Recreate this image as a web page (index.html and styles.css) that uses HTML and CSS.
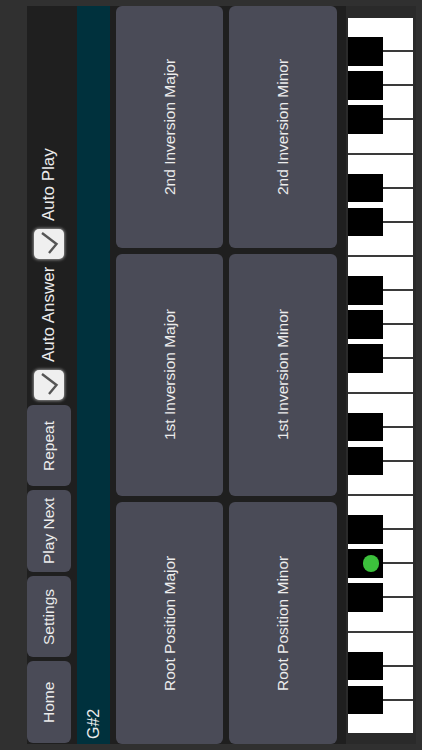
FILE: index.html
```html
<!DOCTYPE html>
<html lang="en">
<head>
  <meta charset="UTF-8" />
  <meta name="viewport" content="width=device-width, initial-scale=1" />
  <title>Chord Trainer</title>
  <link rel="stylesheet" href="styles.css">
</head>
<body>
  <div class="stage">
    <div class="panel">
      <div class="toolbar">
        <button class="tool-button">Home</button>
        <button class="tool-button">Settings</button>
        <button class="tool-button">Play Next</button>
        <button class="tool-button">Repeat</button>
        <div class="check-box first-check">
          <svg viewBox="0 0 30 30" width="30" height="30"><path d="M22 26 L7.5 15 L15 6" fill="none" stroke="#555" stroke-width="2.4"/></svg>
        </div>
        <span class="check-label">Auto Answer</span>
        <div class="check-box">
          <svg viewBox="0 0 30 30" width="30" height="30"><path d="M22 26 L7.5 15 L15 6" fill="none" stroke="#555" stroke-width="2.4"/></svg>
        </div>
        <span class="check-label">Auto Play</span>
      </div>
      <div class="status">G#2</div>
      <div class="chords">
        <button class="chord-button">Root Position Major</button>
        <button class="chord-button">1st Inversion Major</button>
        <button class="chord-button">2nd Inversion Major</button>
        <button class="chord-button">Root Position Minor</button>
        <button class="chord-button">1st Inversion Minor</button>
        <button class="chord-button">2nd Inversion Minor</button>
      </div>
    </div>
    <div class="keyboard">
      <div class="piano">
        <div class="white-key"><div class="black-key"></div></div>
        <div class="white-key"><div class="black-key"></div></div>
        <div class="white-key"></div>
        <div class="white-key"><div class="black-key"></div></div>
        <div class="white-key"><div class="black-key"><span class="note-dot"></span></div></div>
        <div class="white-key"><div class="black-key"></div></div>
        <div class="white-key"></div>
        <div class="white-key"><div class="black-key"></div></div>
        <div class="white-key"><div class="black-key"></div></div>
        <div class="white-key"></div>
        <div class="white-key"><div class="black-key"></div></div>
        <div class="white-key"><div class="black-key"></div></div>
        <div class="white-key"><div class="black-key"></div></div>
        <div class="white-key"></div>
        <div class="white-key"><div class="black-key"></div></div>
        <div class="white-key"><div class="black-key"></div></div>
        <div class="white-key"></div>
        <div class="white-key"><div class="black-key"></div></div>
        <div class="white-key"><div class="black-key"></div></div>
        <div class="white-key"><div class="black-key"></div></div>
        <div class="white-key"></div>
      </div>
    </div>
  </div>
</body>
</html>
```

FILE: styles.css
```css
* {
  margin: 0;
  padding: 0;
  box-sizing: border-box;
  font-family: "Liberation Sans", Arial, sans-serif;
}
html, body {
  width: 422px;
  height: 750px;
  overflow: hidden;
  background-color: #303030;
}
/* the app runs in landscape, the text reads bottom to top */
.stage {
  writing-mode: vertical-rl;
  transform: rotate(180deg);
  inline-size: 750px;
  block-size: 422px;
  padding-block: 27px 6px;
  padding-inline: 6px;
  background-color: #303030;
}
.panel {
  background-color: #1f1f1f;
  block-size: 319px;
}
.toolbar {
  display: flex;
  align-items: flex-start;
  gap: 4px;
  block-size: 50px;
  padding-inline-start: 1px;
}
.tool-button {
  writing-mode: vertical-rl;
  inline-size: 81.5px;
  block-size: 44px;
  background-color: #4a4b57;
  border: none;
  border-radius: 6px;
  color: #ececec;
  font-size: 15.5px;
}
.check-box {
  inline-size: 30px;
  block-size: 30px;
  margin-block-start: 7px;
  margin-inline-start: 4px;
  background-color: #efefef;
  border-radius: 5px;
  box-shadow: 0 0 3px 1px #8a8a8a;
}
.first-check {
  margin-inline-start: 1px;
}
.check-label {
  color: #ececec;
  font-size: 17px;
  line-height: 44px;
  margin-inline-start: 4px;
}
.status {
  block-size: 33px;
  padding-inline-start: 5px;
  background-color: #00313d;
  color: #ececec;
  font-size: 16px;
  line-height: 33px;
}
.chords {
  display: grid;
  grid-template-columns: repeat(3, 242px);
  grid-template-rows: 107px 108px;
  gap: 6px;
  padding-block-start: 6px;
}
.chord-button {
  writing-mode: vertical-rl;
  background-color: #4a4b57;
  border: none;
  border-radius: 6px;
  color: #ececec;
  font-size: 15.5px;
}
.keyboard {
  block-size: 70px;
  padding-block-start: 2px;
  padding-inline-start: 11px;
  background-color: #2a2a2a;
}
.piano {
  display: flex;
  inline-size: 715px;
  block-size: 65px;
  background-color: #fff;
}
.white-key {
  position: relative;
  flex: 1;
  background-color: #fff;
  border-inline-end: 2px solid #3a3a3a;
}
.white-key:last-child {
  border-inline-end: none;
}
.black-key {
  position: absolute;
  inset-block-start: 0;
  inset-inline-end: -15px;
  z-index: 1;
  inline-size: 28.5px;
  block-size: 35.5px;
  background-color: #000;
  display: flex;
  justify-content: center;
  align-items: flex-end;
  padding-block-end: 4px;
}
.note-dot {
  inline-size: 16.5px;
  block-size: 16.5px;
  border-radius: 50%;
  background-color: #3cc13c;
}
```
